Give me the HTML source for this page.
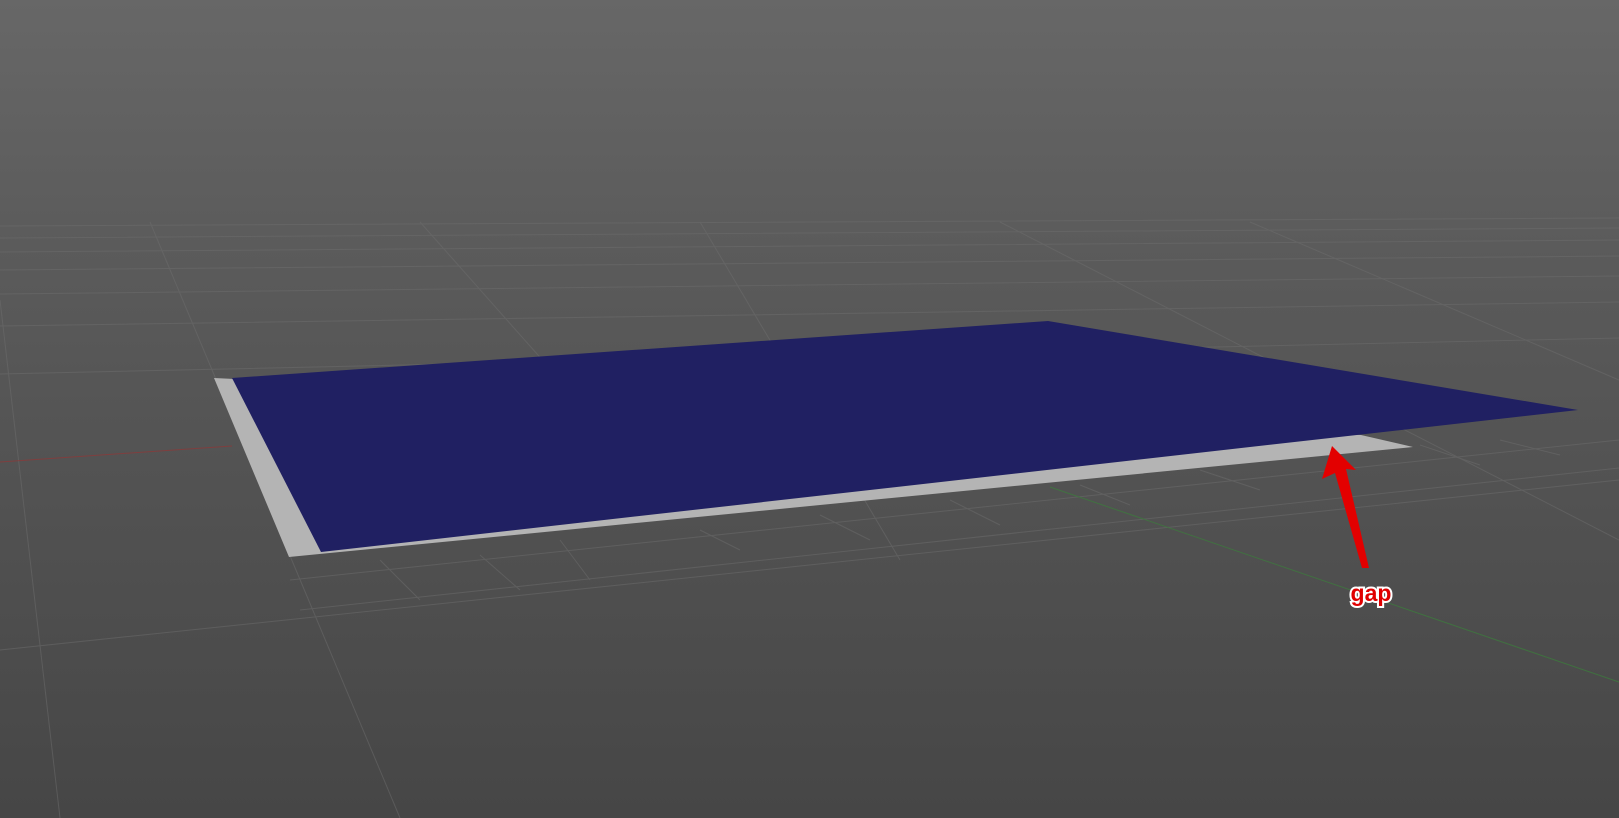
<!DOCTYPE html>
<html><head><style>html,body{margin:0;padding:0;width:1619px;height:818px;overflow:hidden}</style></head>
<body>
<svg width="1619" height="818" viewBox="0 0 1619 818" xmlns="http://www.w3.org/2000/svg">
<defs>
<linearGradient id="bg" x1="0" y1="0" x2="0" y2="1">
<stop offset="0" stop-color="#676767"/><stop offset="0.3" stop-color="#5b5b5b"/><stop offset="1" stop-color="#464646"/>
</linearGradient>
</defs>
<rect width="1619" height="818" fill="url(#bg)"/>
<g stroke="#6e6e6e" stroke-width="1" fill="none" opacity="0.5">
<path d="M0 226 L1619 218 M0 238 L1619 228 M0 252 L1619 240 M0 270 L1619 256 M0 294 L1619 276 M0 326 L1619 302 M0 374 L1619 338"/>
<path d="M290 580 L1619 440 M300 610 L1619 468 M0 650 L1619 480"/>
<path d="M150 222 L400 818 M0 300 L60 818 M420 222 L640 470 M700 222 L900 560 M1000 222 L1619 540 M1250 222 L1619 380"/>
<path d="M380 560 L420 600 M480 555 L520 590 M560 540 L590 580 M700 530 L740 550 M820 515 L870 540 M950 500 L1000 525 M1080 485 L1130 505 M1200 470 L1260 490 M1420 445 L1480 465 M1500 440 L1560 455"/>
</g>
<line x1="0" y1="462" x2="232" y2="446" stroke="#8a3a3a" stroke-width="1" opacity="0.8"/>
<line x1="1050" y1="487" x2="1619" y2="682" stroke="#3d7a3d" stroke-width="1" opacity="0.8"/>
<polygon points="214,378 1361,435 1413,447 289,557" fill="#b4b4b4"/>
<polygon points="232,378 1048,321 1578,410 321,552" fill="#202062"/>
<polygon points="1332,446 1356,470 1346,469 1369,568 1362,568 1335,473 1322,479" fill="#e30000"/>
<text x="1371" y="601" font-family="Liberation Sans, sans-serif" font-weight="bold" font-size="23" fill="#e00000" stroke="#fff" stroke-width="4" paint-order="stroke" text-anchor="middle">gap</text>
</svg>
</body></html>
